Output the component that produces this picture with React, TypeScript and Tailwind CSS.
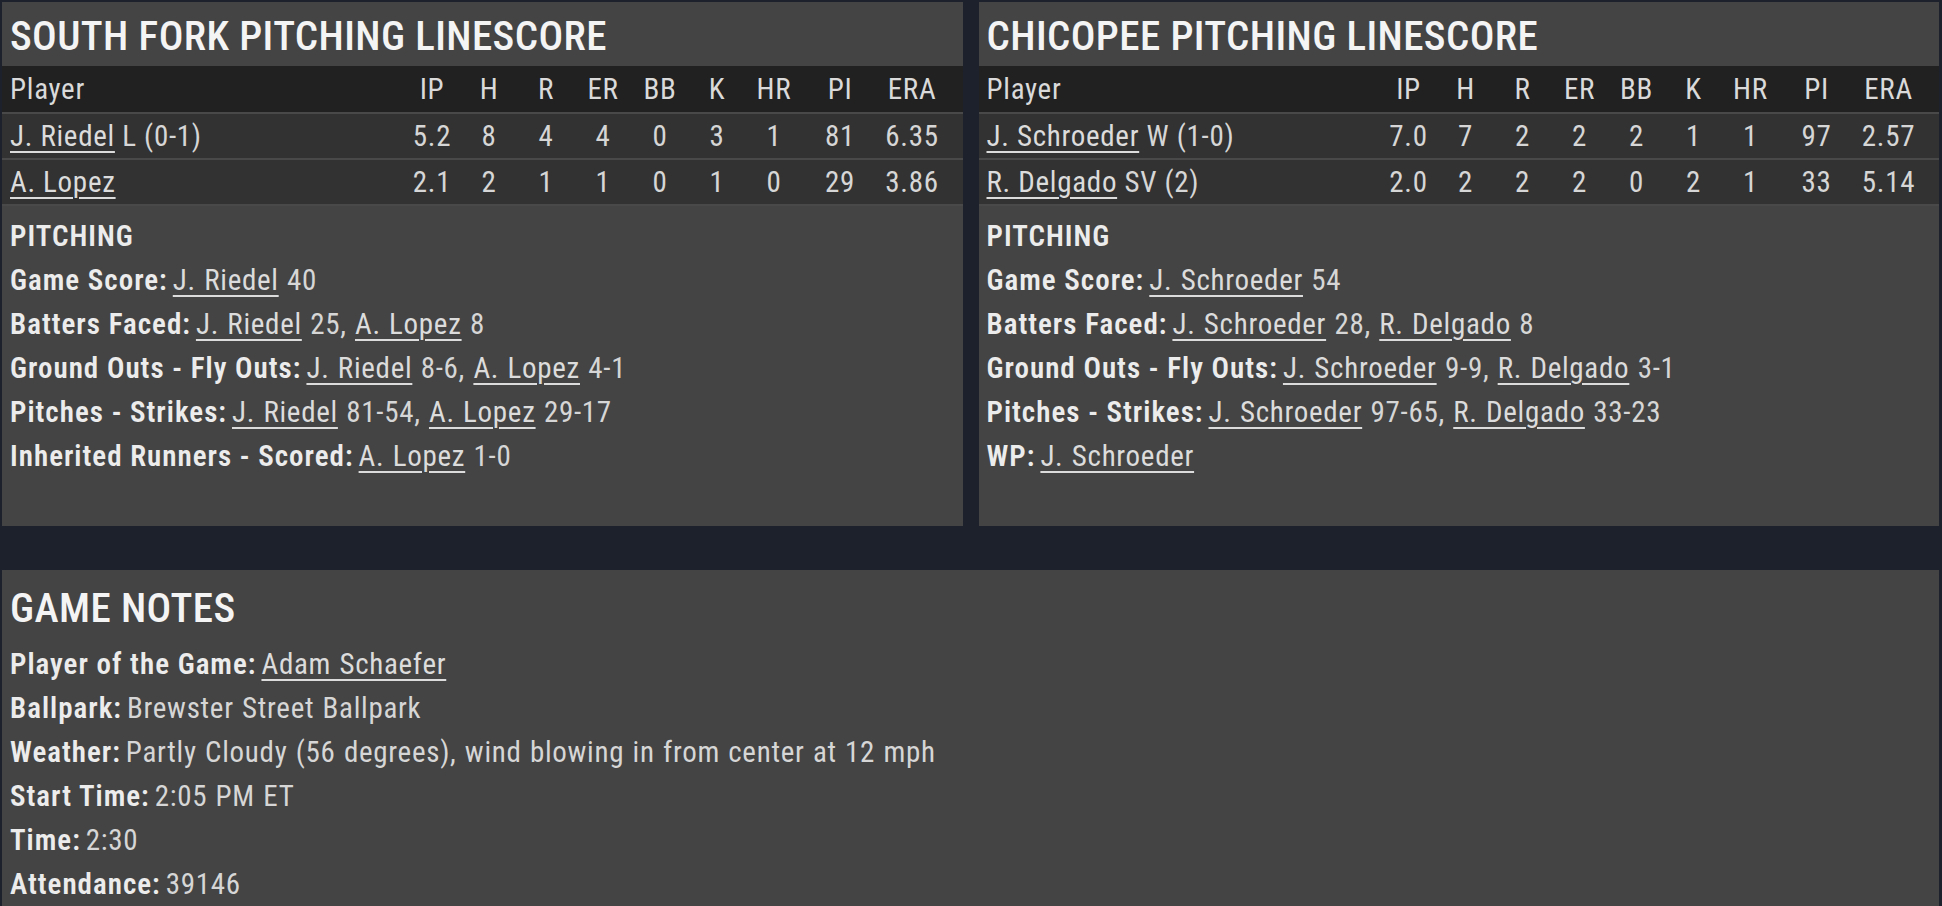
import React from "react";

type Row = { name: string; note?: string; stats: string[] };

const COLS = ["IP", "H", "R", "ER", "BB", "K", "HR", "PI", "ERA"];
const COLW = ["w-[57px]", "w-[57px]", "w-[57px]", "w-[57px]", "w-[57px]", "w-[57px]", "w-[57px]", "w-[75px]", "w-[69px]"];

function L({ children }: { children: React.ReactNode }) {
  return <span className="underline decoration-2 underline-offset-[5px] text-[#dcdcdc]">{children}</span>;
}

function Line({ label, children }: { label: string; children?: React.ReactNode }) {
  return (
    <div className="h-[44px] flex items-center whitespace-nowrap">
      <span className="font-semibold tracking-[1px] text-[#ececec]">{label}</span>
      <span className="ml-[5px] text-[#d6d6d6] [word-spacing:1px]">{children}</span>
    </div>
  );
}

function Panel({ title, rows, lines }: { title: string; rows: Row[]; lines: React.ReactNode }) {
  return (
    <div className="flex-1 bg-[#444444] flex flex-col">
      <div className="h-[64px] flex items-center pt-[4px] px-[8px] text-[41px] tracking-[0.4px] font-medium text-[#f4f4f4]">
        {title}
      </div>
      <div className="h-[46px] flex items-center bg-[#212121] pl-[8px] pr-[16px] text-[#dadada]">
        <div className="flex-1">Player</div>
        {COLS.map((c, i) => (
          <div key={c} className={`${COLW[i]} text-center`}>
            {c}
          </div>
        ))}
      </div>
      {rows.map((r) => (
        <div key={r.name} className="h-[46px] flex items-center bg-[#323232] border-t-2 border-[#494949] pl-[8px] pr-[16px] text-[#d6d6d6]">
          <div className="flex-1 whitespace-nowrap">
            <L>{r.name}</L>
            {r.note ? <span> {r.note}</span> : null}
          </div>
          {r.stats.map((s, i) => (
            <div key={i} className={`${COLW[i]} text-center`}>
              {s}
            </div>
          ))}
        </div>
      ))}
      <div className="border-t-2 border-[#494949] pt-[8px] pb-[48px] px-[8px]">
        <div className="h-[44px] flex items-center font-semibold tracking-[1px] text-[#ececec]">PITCHING</div>
        {lines}
      </div>
    </div>
  );
}

export default function App() {
  return (
    <div className="min-h-screen bg-[#1c212b] pt-[2px] pl-[2px] pr-[3px] font-['Roboto_Condensed','Liberation_Sans_Narrow','DejaVu_Sans_Condensed','Open_Sans',sans-serif] font-stretch-condensed text-[29px] tracking-[0.7px] leading-none">
      <div className="flex gap-[16px]">
        <Panel
          title="SOUTH FORK PITCHING LINESCORE"
          rows={[
            { name: "J. Riedel", note: "L (0-1)", stats: ["5.2", "8", "4", "4", "0", "3", "1", "81", "6.35"] },
            { name: "A. Lopez", stats: ["2.1", "2", "1", "1", "0", "1", "0", "29", "3.86"] },
          ]}
          lines={
            <>
              <Line label="Game Score:">
                <L>J. Riedel</L> 40
              </Line>
              <Line label="Batters Faced:">
                <L>J. Riedel</L> 25, <L>A. Lopez</L> 8
              </Line>
              <Line label="Ground Outs - Fly Outs:">
                <L>J. Riedel</L> 8-6, <L>A. Lopez</L> 4-1
              </Line>
              <Line label="Pitches - Strikes:">
                <L>J. Riedel</L> 81-54, <L>A. Lopez</L> 29-17
              </Line>
              <Line label="Inherited Runners - Scored:">
                <L>A. Lopez</L> 1-0
              </Line>
            </>
          }
        />
        <Panel
          title="CHICOPEE PITCHING LINESCORE"
          rows={[
            { name: "J. Schroeder", note: "W (1-0)", stats: ["7.0", "7", "2", "2", "2", "1", "1", "97", "2.57"] },
            { name: "R. Delgado", note: "SV (2)", stats: ["2.0", "2", "2", "2", "0", "2", "1", "33", "5.14"] },
          ]}
          lines={
            <>
              <Line label="Game Score:">
                <L>J. Schroeder</L> 54
              </Line>
              <Line label="Batters Faced:">
                <L>J. Schroeder</L> 28, <L>R. Delgado</L> 8
              </Line>
              <Line label="Ground Outs - Fly Outs:">
                <L>J. Schroeder</L> 9-9, <L>R. Delgado</L> 3-1
              </Line>
              <Line label="Pitches - Strikes:">
                <L>J. Schroeder</L> 97-65, <L>R. Delgado</L> 33-23
              </Line>
              <Line label="WP:">
                <L>J. Schroeder</L>
              </Line>
            </>
          }
        />
      </div>
      <div className="mt-[44px] bg-[#444444] px-[8px] pb-[40px]">
        <div className="h-[72px] flex items-center pt-[4px] text-[41px] tracking-[0.4px] font-medium text-[#f4f4f4]">GAME NOTES</div>
        <Line label="Player of the Game:">
          <L>Adam Schaefer</L>
        </Line>
        <Line label="Ballpark:">Brewster Street Ballpark</Line>
        <Line label="Weather:">Partly Cloudy (56 degrees), wind blowing in from center at 12 mph</Line>
        <Line label="Start Time:">2:05 PM ET</Line>
        <Line label="Time:">2:30</Line>
        <Line label="Attendance:">39146</Line>
      </div>
    </div>
  );
}
